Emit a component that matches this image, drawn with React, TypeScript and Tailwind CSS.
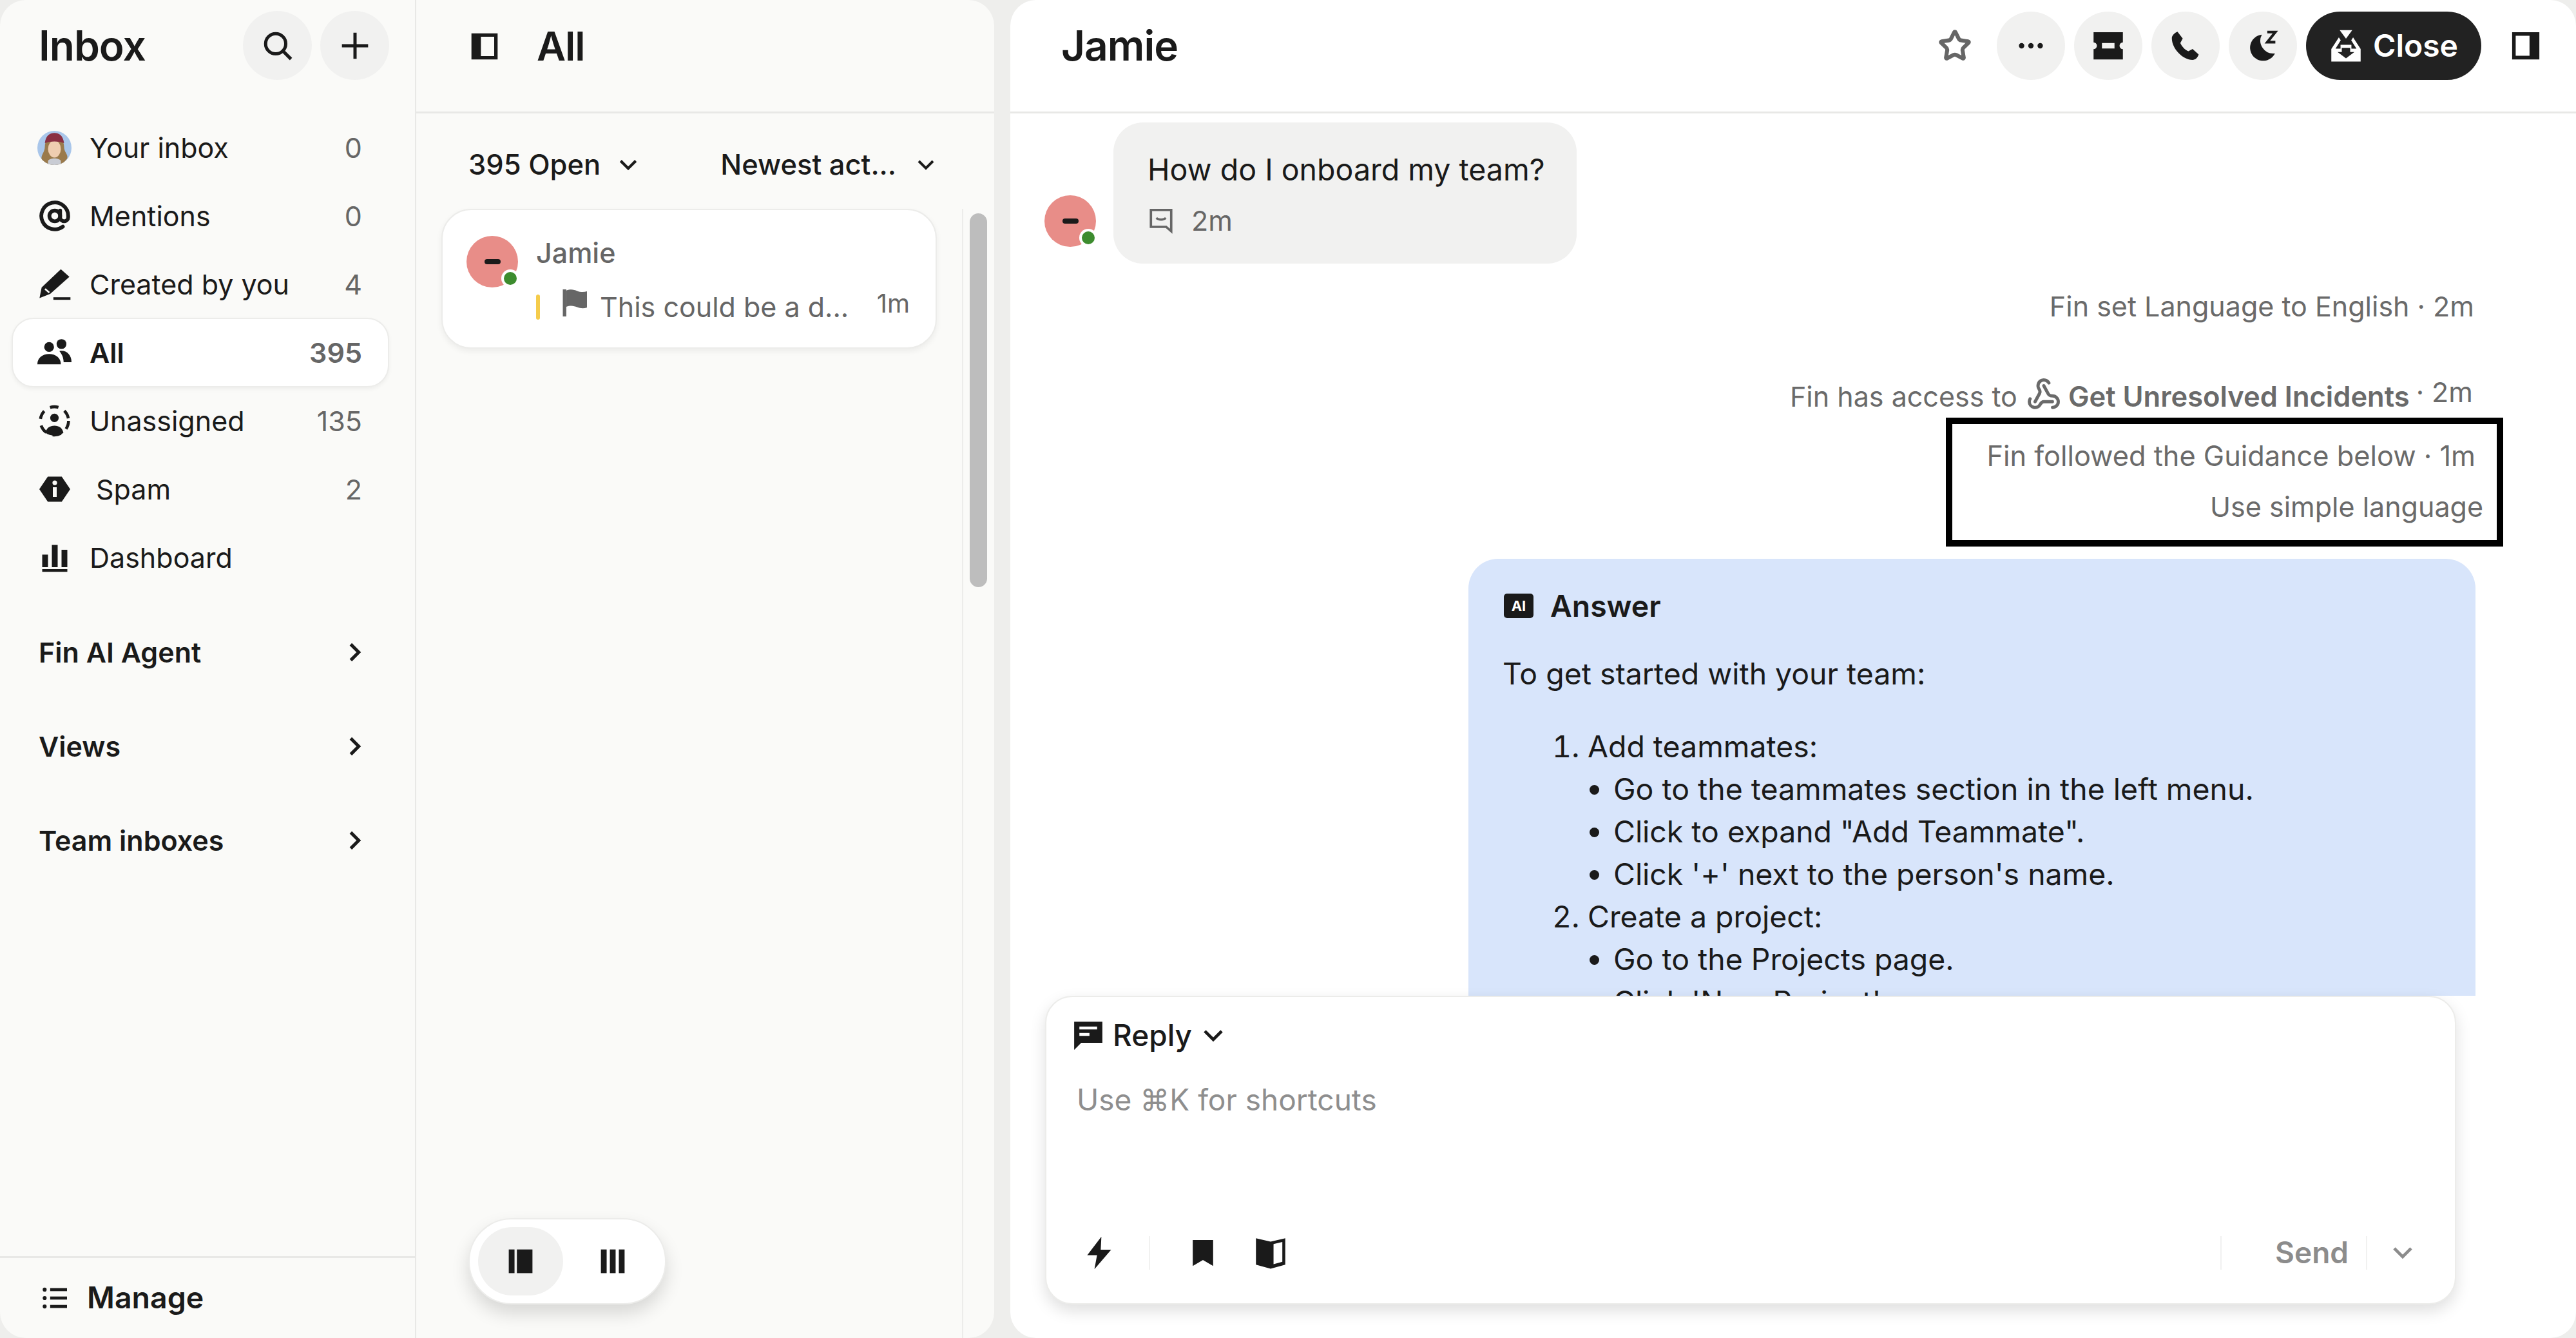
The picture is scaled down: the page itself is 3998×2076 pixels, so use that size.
import React from 'react';
import { AtSign, Star, Webhook } from 'lucide-react';

type IconProps = { className?: string };

const Svg = ({ className, children }: IconProps & { children: React.ReactNode }) => (
  <svg viewBox="0 0 16 16" fill="currentColor" className={className}>
    {children}
  </svg>
);

const SearchIcon = ({ className }: IconProps) => (
  <Svg className={className}>
    <circle cx="7" cy="7" r="5" fill="none" stroke="currentColor" strokeWidth="1.6" />
    <path d="M10.8 10.8 14.6 14.6" stroke="currentColor" strokeWidth="1.6" />
  </Svg>
);
const PlusIcon = ({ className }: IconProps) => (
  <Svg className={className}>
    <path d="M8 1.5v13M1.5 8h13" stroke="currentColor" strokeWidth="1.6" />
  </Svg>
);
const PenIcon = ({ className }: IconProps) => (
  <Svg className={className}>
    <path d="M11 1 15 4.5 6 12.5 1 14.5 2 9.5z" />
    <path d="M3.6 10.2 5.6 11.9" stroke="#fafaf8" strokeWidth="0.8" />
    <path d="M7.500 14.7h8" stroke="currentColor" strokeWidth="1.2" />
  </Svg>
);
const UsersIcon = ({ className }: IconProps) => (
  <Svg className={className}>
    <circle cx="5.5" cy="5.4" r="2.3" />
    <path d="M0 13.5c0-3 2.400-4.800 5.500-4.800s5.500 1.800 5.500 4.800z" />
    <circle cx="11.3" cy="4" r="2.3" />
    <path d="M10.3 7.3c3.200-.6 5.700 1.700 5.700 5.200h-3.700c0-2-.8-3.800-2-5.200z" />
  </Svg>
);
const UnassignedIcon = ({ className }: IconProps) => (
  <Svg className={className}>
    <circle cx="8" cy="6.6" r="2" />
    <path d="M3.800 13.600c.5-2.300 2.100-3.300 4.200-3.300s3.700 1 4.200 3.300c-1.200.9-2.600 1.300-4.200 1.300s-3-.4-4.200-1.300z" />
    <circle cx="8" cy="8" r="6.600" fill="none" stroke="currentColor" strokeWidth="1.4" strokeDasharray="4 3.2" />
  </Svg>
);
const SpamIcon = ({ className }: IconProps) => (
  <Svg className={className}>
    <path d="M4.400 1.500h7.200L16 8l-4.400 6.500H4.400L0 8z" />
    <rect x="7" y="7" width="2" height="5" fill="#fafaf8" />
    <circle cx="8" cy="4.7" r="1.2" fill="#fafaf8" />
  </Svg>
);
const BarsIcon = ({ className }: IconProps) => (
  <Svg className={className}>
    <rect x="1.5" y="6.5" width="3" height="6.5" />
    <rect x="6.5" y="1.5" width="3" height="11.5" />
    <rect x="11.5" y="4" width="3" height="9" />
    <rect x="1.5" y="14" width="13" height="1.4" />
  </Svg>
);
const PanelLeftIcon = ({ className }: IconProps) => (
  <Svg className={className}>
    <path fillRule="evenodd" d="M1.500 1.500h13v13h-13zM6.200 3.200v9.600h6.600V3.200z" />
  </Svg>
);
const PanelRightIcon = ({ className }: IconProps) => (
  <Svg className={className}>
    <path fillRule="evenodd" d="M1.500 1.500h13v13h-13zM3.200 3.200v9.600h6.600V3.200z" />
  </Svg>
);
const FlagIcon = ({ className }: IconProps) => (
  <Svg className={className}>
    <rect x="1.5" y="1" width="1.8" height="14" />
    <path d="M3.300 1.600c2.400-.9 4-.4 5.600.2s3.400.7 5.100.2v8.400c-1.700.5-3.500.4-5.100-.2s-3.200-1.100-5.600-.2z" />
  </Svg>
);
const ChevronDown = ({ className }: IconProps) => (
  <Svg className={className}>
    <path d="M2.500 5 8 10.500 13.500 5" fill="none" stroke="currentColor" strokeWidth="2" />
  </Svg>
);
const ChevronRight = ({ className }: IconProps) => (
  <Svg className={className}>
    <path d="M5.500 2.500 11 8l-5.500 5.500" fill="none" stroke="currentColor" strokeWidth="2.2" />
  </Svg>
);
const DotsIcon = ({ className }: IconProps) => (
  <Svg className={className}>
    <circle cx="2.500" cy="8" r="1.6" />
    <circle cx="8" cy="8" r="1.6" />
    <circle cx="13.500" cy="8" r="1.6" />
  </Svg>
);
const TicketIcon = ({ className }: IconProps) => (
  <Svg className={className}>
    <path
      fillRule="evenodd"
      d="M1 1.500h14v4.900a1.600 1.600 0 0 0 0 3.200v4.900H1V9.600a1.600 1.600 0 0 0 0-3.200zM5 6.700v2.600h6V6.700z"
    />
  </Svg>
);
const PhoneIcon = ({ className }: IconProps) => (
  <Svg className={className}>
    <path d="M4 1 6.600 4.400 5.400 6.600c.8 1.800 2.200 3.300 4 4.100l2.100-1.100 3 2.700c-.5 1.700-1.700 2.700-3 2.700C6.700 15 1.200 9.500 1.200 4.200 1.200 3 2.400 1.600 4 1z" />
  </Svg>
);
const SnoozeIcon = ({ className }: IconProps) => (
  <Svg className={className}>
    <path d="M7.500 2.500A6.500 6.500 0 1 0 14 11.800 6.400 6.400 0 0 1 7.500 2.500z" />
    <path d="M10.200 1.200h4l-4 5h4" fill="none" stroke="currentColor" strokeWidth="1.3" />
  </Svg>
);
const CloseIcon = ({ className }: IconProps) => (
  <Svg className={className}>
    <path d="M5 .5h6L8 4.600z" />
    <path d="M4.600 4 1 9.500v6h14v-6L11.400 4l-.9 1.400 2.500 4h-2.400V7.500H5.400v1.900H3l2.500-4z" />
    <path d="M6 9h4v2h2l-4 3-4-3h2z" fill="#222222" />
  </Svg>
);
const CommentIcon = ({ className }: IconProps) => (
  <Svg className={className}>
    <path d="M2 1.800h12v12.600l-3-2.600H2z" fill="none" stroke="currentColor" strokeWidth="1.4" />
    <path d="M5.200 6.600c1.300 1.200 4.300 1.200 5.600 0" fill="none" stroke="currentColor" strokeWidth="1.3" />
  </Svg>
);
const ReplyIcon = ({ className }: IconProps) => (
  <Svg className={className}>
    <path fillRule="evenodd" d="M1 1h14v10.500H4.500L1 15zM3.600 3.400v1.500h8.800V3.400zM3.600 6.600v1.500h5V6.600z" />
  </Svg>
);
const ZapIcon = ({ className }: IconProps) => (
  <Svg className={className}>
    <path d="M9 .5 2.500 9H7L5.800 15.500 13.500 6.500H8.700z" />
  </Svg>
);
const BookmarkIcon = ({ className }: IconProps) => (
  <Svg className={className}>
    <path d="M2.500 1h11v14L8 11.800 2.500 15z" />
  </Svg>
);
const BookIcon = ({ className }: IconProps) => (
  <Svg className={className}>
    <path fillRule="evenodd" d="M1 1l7 1.600L15 1v12.600L8 15.500 1 13.600zM9.400 3.800v9.600l4.200-1.200V2.800z" />
  </Svg>
);
const SplitIcon = ({ className }: IconProps) => (
  <Svg className={className}>
    <rect x="1" y="1" width="3.400" height="14" />
    <rect x="5.800" y="1" width="9.200" height="14" />
  </Svg>
);
const ColumnsIcon = ({ className }: IconProps) => (
  <Svg className={className}>
    <rect x="1" y="1" width="3.400" height="14" />
    <rect x="6.300" y="1" width="3.400" height="14" />
    <rect x="11.600" y="1" width="3.400" height="14" />
  </Svg>
);
const ListIcon = ({ className }: IconProps) => (
  <Svg className={className}>
    <circle cx="1.400" cy="2.500" r="1.300" />
    <circle cx="1.400" cy="8" r="1.300" />
    <circle cx="1.400" cy="13.500" r="1.300" />
    <rect x="5" y="1.500" width="11" height="2" />
    <rect x="5" y="7" width="11" height="2" />
    <rect x="5" y="12.500" width="11" height="2" />
  </Svg>
);

const Portrait = () => (
  <svg viewBox="0 0 32 32" className="size-[53px] rounded-full">
    <rect width="32" height="32" fill="#a9c6ea" />
    <path d="M7 15c0-7 4-9 9-9s9 2 9 9c0 5 4 7 3 11l-5 6H9l-5-5c-1-4 3-7 3-12z" fill="#9a7a4c" />
    <path d="M10 28c2-3 10-3 12 0v4H10z" fill="#c9ccd4" />
    <ellipse cx="16" cy="17" rx="6" ry="8" fill="#efcdb0" />
    <path d="M7 11.500C8 4 12 2 16 2s8 2 9 9.500c-5-2-13-2-18 0z" fill="#8a2f42" />
  </svg>
);

const navItems = [
  { label: 'Mentions', count: '0', icon: <AtSign className="size-[50px]" strokeWidth={2.8} /> },
  { label: 'Created by you', count: '4', icon: <PenIcon className="size-[56px]" /> },
  { label: 'All', count: '395', icon: <UsersIcon className="size-[54px]" />, active: true },
  { label: 'Unassigned', count: '135', icon: <UnassignedIcon className="size-[54px]" /> },
  { label: 'Spam', count: '2', icon: <SpamIcon className="size-[48px]" />, indent: true },
  { label: 'Dashboard', icon: <BarsIcon className="size-[48px]" /> },
];

const sections = ['Fin AI Agent', 'Views', 'Team inboxes'];

const Avatar = () => (
  <div className="relative size-[80px] shrink-0 rounded-full bg-[#e88d88] flex items-center justify-center">
    <div className="w-[25px] h-[8px] rounded-full bg-[#1a1a1a]" />
    <div className="absolute right-[-2px] bottom-0 size-[28px] rounded-full bg-white flex items-center justify-center">
      <div className="size-[20px] rounded-full bg-[#3d8c2e]" />
    </div>
  </div>
);

const Sidebar = () => (
  <div className="w-[646px] shrink-0 flex flex-col border-r-[2px] border-[#e8e8e6]">
    <div className="h-[176px] shrink-0 pl-[60px] pr-[40px] pt-[17px] flex items-start justify-between">
      <div className="h-[107px] flex items-center text-[64px] font-semibold tracking-[-1px] text-[#1a1a1a]">Inbox</div>
      <div className="flex gap-[13px]">
        <div className="size-[107px] rounded-full bg-[#f1f1f0] flex items-center justify-center">
          <SearchIcon className="size-[50px] text-[#1a1a1a]" />
        </div>
        <div className="size-[107px] rounded-full bg-[#f1f1f0] flex items-center justify-center">
          <PlusIcon className="size-[50px] text-[#1a1a1a]" />
        </div>
      </div>
    </div>
    <div className="flex flex-col text-[#1a1a1a] text-[43px]">
      <div className="h-[106px] ml-[18px] mr-[40px] flex items-center pl-[40px] pr-[42px]">
        <div className="w-[81px] shrink-0">
          <Portrait />
        </div>
        <span className="flex-1">Your inbox</span>
        <span className="text-[#666666]">0</span>
      </div>
      {navItems.map((item) => (
        <div
          key={item.label}
          className={
            item.active
              ? 'h-[108px] -my-px ml-[18px] mr-[40px] flex items-center pl-[38px] pr-[40px] rounded-[34px] bg-white border-[2px] border-[#ececea] shadow-[0_3px_6px_rgba(0,0,0,0.05)]'
              : 'h-[106px] ml-[18px] mr-[40px] flex items-center pl-[40px] pr-[42px]'
          }
        >
          <div className="w-[81px] shrink-0 flex">
            <div className="w-[53px] flex justify-center">{item.icon}</div>
          </div>
          <span className={item.active ? 'flex-1 font-semibold' : item.indent ? 'flex-1 pl-[10px]' : 'flex-1'}>{item.label}</span>
          {item.count && <span className={item.active ? 'font-semibold text-[#666666]' : 'text-[#666666]'}>{item.count}</span>}
        </div>
      ))}
    </div>
    <div className="mt-[21px] flex flex-col">
      {sections.map((s) => (
        <div key={s} className="h-[146px] pl-[60px] pr-[76px] flex items-center justify-between text-[43px] font-semibold text-[#1a1a1a]">
          <span>{s}</span>
          <ChevronRight className="size-[36px]" />
        </div>
      ))}
    </div>
    <div className="mt-auto h-[127px] shrink-0 border-t-[3px] border-[#e8e8e6] pl-[63px] flex items-center gap-[28px] text-[#1a1a1a] text-[46.500px] font-semibold">
      <ListIcon className="w-[44px] h-[38px]" />
      <span>Manage</span>
    </div>
  </div>
);

const ConversationList = () => (
  <div className="relative flex-1 flex flex-col min-w-0">
    <div className="h-[176px] shrink-0 border-b-[3px] border-[#e8e8e6] pl-[81px] pb-[30px] flex items-center gap-[56px]">
      <PanelLeftIcon className="size-[50px] text-[#1a1a1a]" />
      <span className="text-[62px] font-semibold tracking-[-1px] text-[#1a1a1a]">All</span>
    </div>
    <div className="h-[148px] shrink-0 pt-[12px] pl-[81px] pr-[90px] flex items-center justify-between text-[#1a1a1a] text-[43.500px] font-medium">
      <div className="flex items-center gap-[26px]">
        <span>395 Open</span>
        <ChevronDown className="size-[34px]" />
      </div>
      <div className="flex items-center gap-[30px]">
        <span>Newest act...</span>
        <ChevronDown className="size-[32px]" />
      </div>
    </div>
    <div className="flex-1 flex min-h-0">
      <div className="w-[847px] shrink-0 pl-[39px]">
        <div className="w-[769px] h-[217px] rounded-[46px] bg-white border-[2px] border-[#ececea] shadow-[0_4px_10px_rgba(0,0,0,0.06)] pl-[37px] pr-[40px] pt-[40px] flex gap-[28px]">
          <Avatar />
          <div className="flex-1 min-w-0 flex flex-col">
            <div className="-mt-[2px] text-[43px] leading-[56px] font-medium text-[#666666]">Jamie</div>
            <div className="mt-[24px] flex items-center text-[#666666]">
              <div className="w-[6px] h-[39px] rounded-full bg-[#f5cc4b]" />
              <FlagIcon className="ml-[31px] size-[48px] -mt-[12px]" />
              <span className="ml-[14px] flex-1 text-[43px] whitespace-nowrap">This could be a d...</span>
              <span className="text-[40px] -mt-[10px]">1m</span>
            </div>
          </div>
        </div>
      </div>
      <div className="flex-1 border-l-[2px] border-[#ececea] pl-[10px]">
        <div className="mt-[7px] w-[27px] h-[580px] rounded-full bg-[#bdbdbd]" />
      </div>
    </div>
    <div className="absolute left-[81px] bottom-[52px] w-[307px] h-[134px] rounded-full bg-white border-[2px] border-[#ececea] shadow-[0_14px_28px_rgba(0,0,0,0.14)] pl-[13px] flex items-center">
      <div className="w-[132px] h-[106px] rounded-full bg-[#f1f1f0] flex items-center justify-center">
        <SplitIcon className="w-[46px] h-[42px] text-[#1a1a1a]" />
      </div>
      <ColumnsIcon className="ml-[54px] w-[46px] h-[42px] text-[#1a1a1a]" />
    </div>
  </div>
);

const headerActions = [
  <DotsIcon key="dots" className="size-[42px]" />,
  <TicketIcon key="ticket" className="size-[52px]" />,
  <PhoneIcon key="phone" className="size-[50px]" />,
  <SnoozeIcon key="snooze" className="size-[50px]" />,
];

const ConversationPanel = () => (
  <div className="w-[2430px] shrink-0 bg-white rounded-[40px] overflow-hidden flex flex-col">
    <div className="h-[176px] shrink-0 border-b-[3px] border-[#e8e8e6] pl-[79px] pr-[52px] pb-[31px] flex items-center text-[#1a1a1a]">
      <span className="text-[64px] font-semibold tracking-[-1px] flex-1">Jamie</span>
      <Star className="size-[52px] text-[#666666] mr-[39px]" strokeWidth={2.8} />
      <div className="flex gap-[14px] items-center">
        {headerActions.map((icon) => (
          <div key={icon.key} className="size-[106px] rounded-full bg-[#f1f1f0] flex items-center justify-center">
            {icon}
          </div>
        ))}
        <div className="h-[106px] w-[272px] rounded-full bg-[#222222] text-white flex items-center justify-center gap-[16px] text-[48px] font-semibold">
          <CloseIcon className="size-[52px]" />
          <span>Close</span>
        </div>
      </div>
      <PanelRightIcon className="ml-[43px] size-[52px]" />
    </div>
    <div className="flex-1 min-h-0 overflow-hidden flex flex-col">
      <div className="mt-[14px] pl-[53px] flex items-end gap-[27px]">
        <div className="mb-[26px]">
          <Avatar />
        </div>
        <div className="w-[719px] h-[219px] rounded-[46px] bg-[#f1f1f0] pl-[53px] pt-[43px]">
          <div className="text-[46.500px] leading-[60px] text-[#1a1a1a]">How do I onboard my team?</div>
          <div className="mt-[17px] flex items-center gap-[26px] text-[#666666] text-[43px]">
            <CommentIcon className="size-[42px]" />
            <span>2m</span>
          </div>
        </div>
      </div>
      <div className="flex flex-col items-end text-[43px] leading-[60px] text-[#6a6a6a]">
        <div className="mt-[36px] pr-[158px]">Fin set Language to English · 2m</div>
        <div className="mt-[80px] pr-[160px] flex items-center">
          <span>Fin has access to</span>
          <Webhook className="ml-[14px] mr-[11px] size-[54px] -mt-[6px]" strokeWidth={2.2} />
          <span className="font-semibold text-[43.500px]">Get Unresolved Incidents</span>
          <span className="ml-[10px] -mt-[14px]">· 2m</span>
        </div>
        <div className="mt-[3px] mr-[113px] w-[865px] h-[200px] border-[10px] border-black flex flex-col items-end pt-[19px]">
          <div className="pr-[33px] text-[43.300px]">Fin followed the Guidance below · 1m</div>
          <div className="mt-[19px] pr-[21px]">Use simple language</div>
        </div>
      </div>
      <div className="mt-[19px] ml-[711px] w-[1563px] shrink-0 rounded-t-[46px] bg-[#d8e5fb] pl-[53px] pt-[40px] text-[46.400px] leading-[66px] text-[#1a1a1a]">
        <div className="flex items-center gap-[26px] font-semibold">
          <div className="ml-[2px] w-[46px] h-[38px] rounded-[5px] bg-[#1a1a1a] flex items-center justify-center text-white text-[22px] leading-none font-bold">AI</div>
          <span>Answer</span>
        </div>
        <div className="mt-[39px]">To get started with your team:</div>
        <ol className="mt-[47px] pl-[132px] list-decimal">
          <li>
            Add teammates:
            <ul className="pl-[40px] list-disc">
              <li>Go to the teammates section in the left menu.</li>
              <li>Click to expand "Add Teammate".</li>
              <li>Click '+' next to the person's name.</li>
            </ul>
          </li>
          <li>
            Create a project:
            <ul className="pl-[40px] list-disc">
              <li>Go to the Projects page.</li>
              <li>Click 'New Project'.</li>
            </ul>
          </li>
        </ol>
      </div>
    </div>
    <div className="relative shrink-0 ml-[54px] mb-[52px] w-[2190px] h-[479px] rounded-[42px] bg-white border-[2px] border-[#ececea] shadow-[0_10px_24px_rgba(0,0,0,0.13)] flex flex-col pl-[42px] pr-[62px]">
      <div className="mt-[25px] flex items-center text-[#1a1a1a] text-[46px] font-medium">
        <ReplyIcon className="size-[50px] -ml-[2px]" />
        <span className="ml-[13px]">Reply</span>
        <ChevronDown className="ml-[14px] size-[38px]" />
      </div>
      <div className="mt-[31px] pl-[5px] text-[46px] text-[#8e8e8e]">Use ⌘K for shortcuts</div>
      <div className="mt-auto mb-[44px] flex items-center">
        <ZapIcon className="size-[54px] ml-[13px] text-[#1a1a1a]" />
        <div className="ml-[50px] w-[2px] h-[52px] bg-[#f1f1f0]" />
        <BookmarkIcon className="ml-[59px] size-[46px] text-[#1a1a1a]" />
        <BookIcon className="ml-[56px] size-[52px] text-[#1a1a1a]" />
        <div className="ml-auto w-[2px] h-[52px] bg-[#f1f1f0]" />
        <span className="ml-[83px] text-[46px] font-semibold text-[#8c8c8c]">Send</span>
        <div className="ml-[27px] w-[2px] h-[52px] bg-[#f1f1f0]" />
        <ChevronDown className="ml-[36px] size-[38px] text-[#8c8c8c]" />
      </div>
    </div>
  </div>
);

const App = () => {
  return (
    <div className="w-[3998px] h-[2076px] overflow-hidden bg-[#eeeeec] flex gap-[25px] [font-family:Inter,sans-serif]">
      <div className="w-[1543px] shrink-0 flex bg-[#fafaf8] rounded-[40px] overflow-hidden">
        <Sidebar />
        <ConversationList />
      </div>
      <ConversationPanel />
    </div>
  );
};

export default App;
